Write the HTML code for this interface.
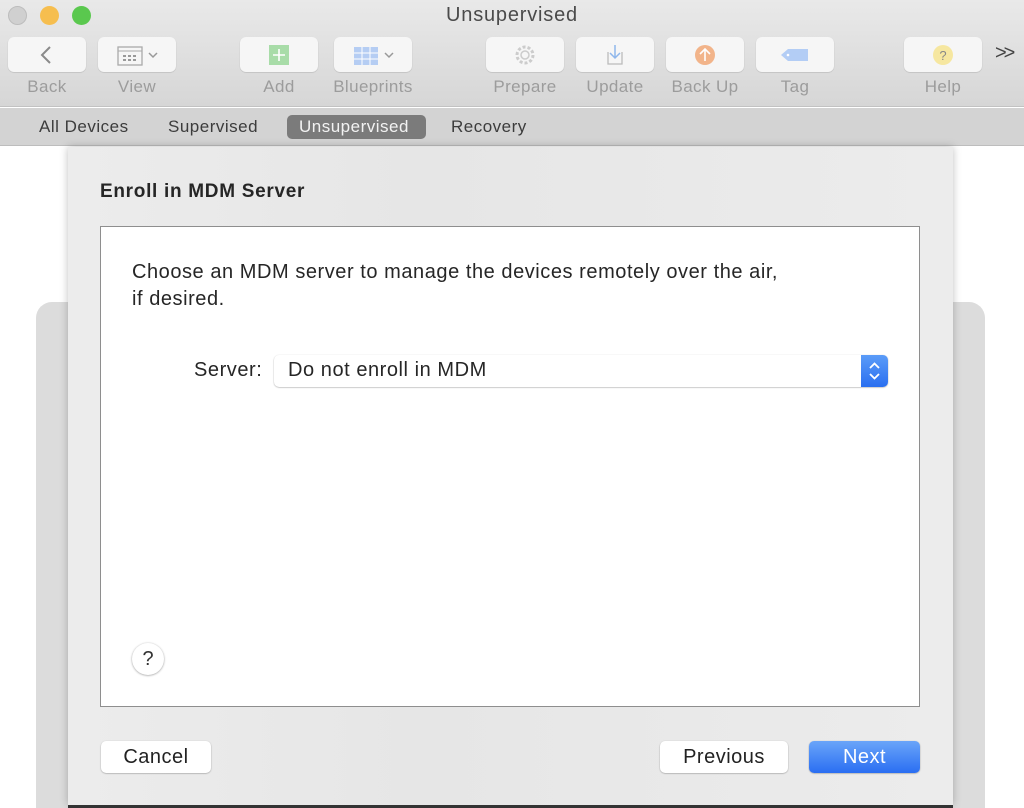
<!DOCTYPE html>
<html style="width:1024px;height:808px;overflow:hidden"><head><meta charset="utf-8"><style>
*{margin:0;padding:0;box-sizing:border-box}
body{width:1024px;height:808px;overflow:hidden;font-family:"Liberation Sans",sans-serif;background:#fff;position:relative}
.abs{position:absolute}
.tb{position:absolute;top:0;left:0;width:1024px;height:107px;background:linear-gradient(#e9e9e9,#d6d6d6);border-bottom:1px solid #c2c2c2}
.title{position:absolute;top:4px;left:0;width:1024px;text-align:center;font-size:20px;color:#4a4a4a;letter-spacing:0.8px}
.btn{position:absolute;top:37px;width:78px;height:35px;background:#f6f6f6;border-radius:6px;box-shadow:0 0.5px 1px rgba(0,0,0,.2);display:flex;align-items:center;justify-content:center}
.lbl{position:absolute;top:77px;font-size:17px;color:#9c9c9c;text-align:center;width:110px;letter-spacing:0.4px}
.tabs{position:absolute;top:108px;left:0;width:1024px;height:38px;background:#d3d3d3;border-bottom:1px solid #bdbdbd}
.tab{position:absolute;top:7px;font-size:17px;color:#3c3c3c;line-height:24px;letter-spacing:0.5px}
.sel{background:#7b7b7b;color:#f2f2f2;border-radius:5px;padding:0 12px;left:287px;width:139px}
.panel{position:absolute;left:36px;top:302px;width:949px;height:506px;background:#dcdcdc;border-radius:16px 16px 0 0}
.sheet{position:absolute;left:68px;top:147px;width:885px;height:658px;background:linear-gradient(90deg,#ececec 0%,#e6e6e6 40%,#ececec 100%);box-shadow:0 0 8px rgba(0,0,0,.25)}
.box{position:absolute;left:32px;top:79px;width:820px;height:481px;background:#fff;border:1px solid #8e8e8e}
.pb{position:absolute;top:594px;height:32px;border-radius:5px;background:#fff;box-shadow:0 0.5px 1.5px rgba(0,0,0,.35);font-size:20px;color:#222;display:flex;align-items:center;justify-content:center}
.t{font-size:20px;color:#262626;letter-spacing:0.55px}
</style></head><body>
<div class="panel"></div>
<div class="tb">
 <div class="abs" style="left:8px;top:6px;width:19px;height:19px;border-radius:50%;background:#d0d0d0;border:1px solid #bdbdbd"></div>
 <div class="abs" style="left:40px;top:6px;width:19px;height:19px;border-radius:50%;background:#f6be4f"></div>
 <div class="abs" style="left:72px;top:6px;width:19px;height:19px;border-radius:50%;background:#5ac84e"></div>
 <div class="title">Unsupervised</div>
 <div class="btn" style="left:8px"><svg width="20" height="22"><path d="M13 3 L5 11 L13 19" fill="none" stroke="#8a8a8a" stroke-width="2"/></svg></div>
 <div class="btn" style="left:98px"><svg width="50" height="22"><rect x="6" y="3" width="24" height="18" fill="none" stroke="#aaa" stroke-width="1.3"/><line x1="6" y1="7" x2="30" y2="7" stroke="#aaa"/><g fill="#999"><rect x="11" y="11" width="3" height="2"/><rect x="16" y="11" width="3" height="2"/><rect x="21" y="11" width="3" height="2"/><rect x="11" y="15" width="3" height="2"/><rect x="16" y="15" width="3" height="2"/><rect x="21" y="15" width="3" height="2"/></g><path d="M37 9 L41 13 L45 9" fill="none" stroke="#999" stroke-width="1.5"/></svg></div>
 <div class="btn" style="left:240px"><svg width="22" height="22"><rect x="1" y="1" width="20" height="20" fill="#a8dca8"/><path d="M11 5v12M5 11h12" stroke="#fff" stroke-width="1.6"/></svg></div>
 <div class="btn" style="left:334px"><svg width="50" height="22"><rect x="6" y="3" width="24" height="18" fill="#b5cdf3"/><g stroke="#fff"><path d="M6 9h24M6 15h24M14 3v18M22 3v18"/></g><path d="M37 9 L41 13 L45 9" fill="none" stroke="#999" stroke-width="1.5"/></svg></div>
 <div class="btn" style="left:486px"><svg width="24" height="24"><circle cx="12" cy="12" r="8" fill="none" stroke="#ccc" stroke-width="3" stroke-dasharray="3 2"/><circle cx="12" cy="12" r="4" fill="none" stroke="#ccc" stroke-width="1.5"/></svg></div>
 <div class="btn" style="left:576px"><svg width="22" height="24"><path d="M4 9v12h14V9" fill="none" stroke="#bbb" stroke-width="1.3"/><path d="M11 2v13M6 10l5 5 5-5" fill="none" stroke="#8fb7ec" stroke-width="1.5"/></svg></div>
 <div class="btn" style="left:666px"><svg width="24" height="24"><circle cx="12" cy="12" r="10" fill="#f2b48a"/><path d="M12 18V6M7 11l5-5 5 5" fill="none" stroke="#fff" stroke-width="1.6"/></svg></div>
 <div class="btn" style="left:756px"><svg width="30" height="20"><path d="M1 10 L8 4 H28 V16 H8 Z" fill="#b3cdf5"/><circle cx="8" cy="10" r="1.3" fill="#fff"/></svg></div>
 <div class="btn" style="left:904px"><svg width="22" height="22"><circle cx="11" cy="11" r="10" fill="#f6e7a0"/><text x="11" y="16" font-size="13" text-anchor="middle" fill="#888" font-family="Liberation Sans">?</text></svg></div>
 <div class="abs" style="left:995px;top:42px;font-size:20px;color:#444;letter-spacing:-3px">&gt;&gt;</div>
 <div class="lbl" style="left:-8px">Back</div>
 <div class="lbl" style="left:82px">View</div>
 <div class="lbl" style="left:224px">Add</div>
 <div class="lbl" style="left:318px">Blueprints</div>
 <div class="lbl" style="left:470px">Prepare</div>
 <div class="lbl" style="left:560px">Update</div>
 <div class="lbl" style="left:650px">Back Up</div>
 <div class="lbl" style="left:740px">Tag</div>
 <div class="lbl" style="left:888px">Help</div>
</div>
<div class="tabs">
 <div class="tab" style="left:39px">All Devices</div>
 <div class="tab" style="left:168px">Supervised</div>
 <div class="tab sel">Unsupervised</div>
 <div class="tab" style="left:451px">Recovery</div>
</div>
<div class="sheet">
 <div class="abs" style="left:32px;top:34px;font-size:19px;font-weight:bold;color:#262626;letter-spacing:0.7px">Enroll in MDM Server</div>
 <div class="box">
  <div class="abs t" style="left:31px;top:32px;line-height:27px">Choose an MDM server to manage the devices remotely over the air,<br>if desired.</div>
  <div class="abs t" style="left:93px;top:132px">Server:</div>
  <div class="abs" style="left:173px;top:128px;width:614px;height:32px;background:#fff;border-radius:5px;box-shadow:0 0.5px 1.5px rgba(0,0,0,.35)">
   <div class="abs t" style="left:14px;top:4px">Do not enroll in MDM</div>
   <div class="abs" style="right:0;top:0;width:27px;height:32px;border-radius:0 5px 5px 0;background:linear-gradient(#5b9cf8,#2a6ff0)"><svg width="27" height="32"><path d="M9 13l4.5-4.5L18 13M9 19l4.5 4.5L18 19" fill="none" stroke="#fff" stroke-width="1.8"/></svg></div>
  </div>
  <div class="abs" style="left:31px;top:416px;width:32px;height:32px;border-radius:50%;background:#fff;box-shadow:0 0.5px 2px rgba(0,0,0,.4);font-size:20px;color:#333;text-align:center;line-height:32px">?</div>
 </div>
 <div class="pb" style="left:33px;width:110px;letter-spacing:0.5px">Cancel</div>
 <div class="pb" style="left:592px;width:128px;letter-spacing:0.5px">Previous</div>
 <div class="pb" style="left:741px;width:111px;background:linear-gradient(#6aa5f9,#2a6ef2);color:#fff;letter-spacing:0.5px">Next</div>
</div>
<div class="abs" style="left:68px;top:805px;width:885px;height:3px;background:#333"></div>
</body></html>
